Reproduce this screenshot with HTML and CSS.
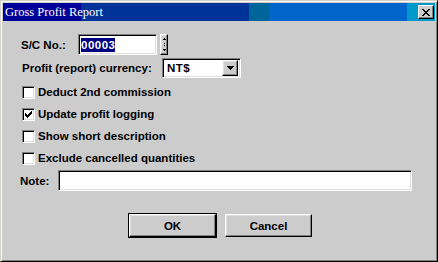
FILE: index.html
```html
<!DOCTYPE html>
<html lang="en">
<head>
  <meta charset="UTF-8">
  <title>Gross Profit Report</title>
  <link rel="stylesheet" href="styles.css">
</head>
<body>
  <div class="window">
    <div class="title-bar">
      <span class="title">Gross Profit Report</span>
      <div class="close-btn">
        <svg width="8" height="7" viewBox="0 0 8 7"><path d="M0 0h2v1h1v1h2v-1h1v-1h2v1h-1v1h-1v1h-1v1h1v1h1v1h1v1h-2v-1h-1v-1h-2v1h-1v1h-2v-1h1v-1h1v-1h1v-1h-1v-1h-1v-1h-1z" fill="#000"/></svg>
      </div>
    </div>
    <div class="content">
      <div class="row row-sc">
        <label class="lbl lbl-sc">S/C No.:</label>
        <div class="field sunken sc-input"><span class="selected">00003</span></div>
        <div class="spinner raised">
          <svg width="5" height="17" viewBox="0 0 5 17"><path d="M2 2h1v1h-1zM1 3h3v1h-3zM2 7h1v1h-1zM2 9h1v1h-1zM1 13h3v1h-3zM2 14h1v1h-1z" fill="#000"/></svg>
        </div>
      </div>
      <div class="row row-cur">
        <label class="lbl lbl-cur">Profit (report) currency:</label>
        <div class="field sunken select">
          <span class="select-text">NT$</span>
          <div class="drop-btn raised">
            <svg width="7" height="4" viewBox="0 0 7 4"><path d="M0 0h7v1h-1v1h-1v1h-1v1h-1v-1h-1v-1h-1v-1h-1z" fill="#000"/></svg>
          </div>
        </div>
      </div>
      <div class="checks">
        <div class="check-row"><span class="box sunken"></span>Deduct 2nd commission</div>
        <div class="check-row"><span class="box sunken">
          <svg width="7" height="7" viewBox="0 0 7 7"><path d="M6 0h1v3h-1v1h-1v1h-1v1h-1v1h-1v-1h-1v-1h-1v-3h1v1h1v1h1v-1h1v-1h1v-1h1z" fill="#000"/></svg>
        </span>Update profit logging</div>
        <div class="check-row"><span class="box sunken"></span>Show short description</div>
        <div class="check-row"><span class="box sunken"></span>Exclude cancelled quantities</div>
      </div>
      <div class="row row-note">
        <label class="lbl lbl-note">Note:</label>
        <div class="field sunken note-input"></div>
      </div>
      <div class="buttons">
        <div class="btn raised default">OK</div>
        <div class="btn raised">Cancel</div>
      </div>
    </div>
  </div>
</body>
</html>
```

FILE: styles.css
```css
html, body {
  margin: 0;
  padding: 0;
}
body {
  width: 438px;
  height: 262px;
  background-color: #cccccc;
  font-family: "Liberation Sans", Arial, sans-serif;
}
.window {
  box-sizing: border-box;
  width: 438px;
  height: 262px;
  border: 1px solid;
  border-color: #d4d0c8 #000 #000 #d4d0c8;
  box-shadow: inset 1px 1px #fff, inset -1px -1px #808080;
  padding: 2px;
  background-color: #cccccc;
}
.title-bar {
  height: 18px;
  display: flex;
  align-items: center;
  justify-content: space-between;
  background: linear-gradient(to right,
    #000099 0, #000099 78px,
    #003399 78px, #003399 246px,
    #006699 246px, #006699 266px,
    #0066cc 266px, #0066cc 404px,
    #0099cc 404px);
}
.title {
  color: #fff;
  font-family: "Liberation Serif", "Times New Roman", serif;
  font-size: 12.5px;
  margin-left: 2px;
}
.close-btn {
  box-sizing: border-box;
  width: 16px;
  height: 14px;
  margin-right: 1px;
  background-color: #cccccc;
  border: 1px solid;
  border-color: #fff #000 #000 #fff;
  box-shadow: inset -1px -1px #808080;
  display: flex;
  align-items: center;
  justify-content: center;
}
.raised {
  border: 1px solid;
  border-color: #fff #000 #000 #fff;
  box-shadow: inset -1px -1px #808080, inset 1px 1px #dfdfdf;
  background-color: #cccccc;
}
.sunken {
  border: 1px solid;
  border-color: #808080 #fff #fff #808080;
  box-shadow: inset 1px 1px #000, inset -1px -1px #dfdfdf;
  background-color: #fff;
}
.content {
  font-size: 11.5px;
  font-weight: bold;
  color: #000;
  padding-top: 13px;
}
.row {
  display: flex;
  align-items: center;
}
.lbl {
  white-space: nowrap;
}
.row-sc {
  height: 21px;
}
.lbl-sc {
  margin-left: 18px;
  width: 57px;
}
.field {
  box-sizing: border-box;
}
.sc-input {
  width: 79px;
  height: 21px;
  display: flex;
  align-items: center;
  padding-left: 2px;
}
.selected {
  background-color: #000080;
  color: #fff;
  padding: 1px 0;
  letter-spacing: 0.5px;
}
.spinner {
  box-sizing: border-box;
  width: 8px;
  height: 21px;
  margin-left: 3px;
  display: flex;
  align-items: center;
  justify-content: center;
}
.row-cur {
  height: 20px;
  margin-top: 3px;
}
.lbl-cur {
  margin-left: 19px;
  width: 140px;
}
.select {
  width: 79px;
  height: 20px;
  display: flex;
  align-items: center;
  justify-content: space-between;
  padding: 2px;
}
.select-text {
  margin-left: 2px;
  letter-spacing: 0.5px;
}
.drop-btn {
  box-sizing: border-box;
  width: 16px;
  height: 16px;
  display: flex;
  align-items: center;
  justify-content: center;
}
.checks {
  margin-top: 3px;
  margin-left: 19px;
}
.check-row {
  height: 22px;
  display: flex;
  align-items: center;
}
.box {
  box-sizing: border-box;
  width: 13px;
  height: 13px;
  margin-right: 3px;
  display: flex;
  align-items: center;
  justify-content: center;
}
.row-note {
  height: 21px;
  margin-top: 1px;
}
.lbl-note {
  margin-left: 17px;
  width: 38px;
}
.note-input {
  width: 354px;
  height: 21px;
}
.buttons {
  display: flex;
  justify-content: center;
  gap: 9px;
  margin-top: 23px;
  padding-left: 3px;
}
.btn {
  box-sizing: border-box;
  width: 87px;
  height: 23px;
  display: flex;
  align-items: center;
  justify-content: center;
}
.default {
  outline: 1px solid #000;
}
```
